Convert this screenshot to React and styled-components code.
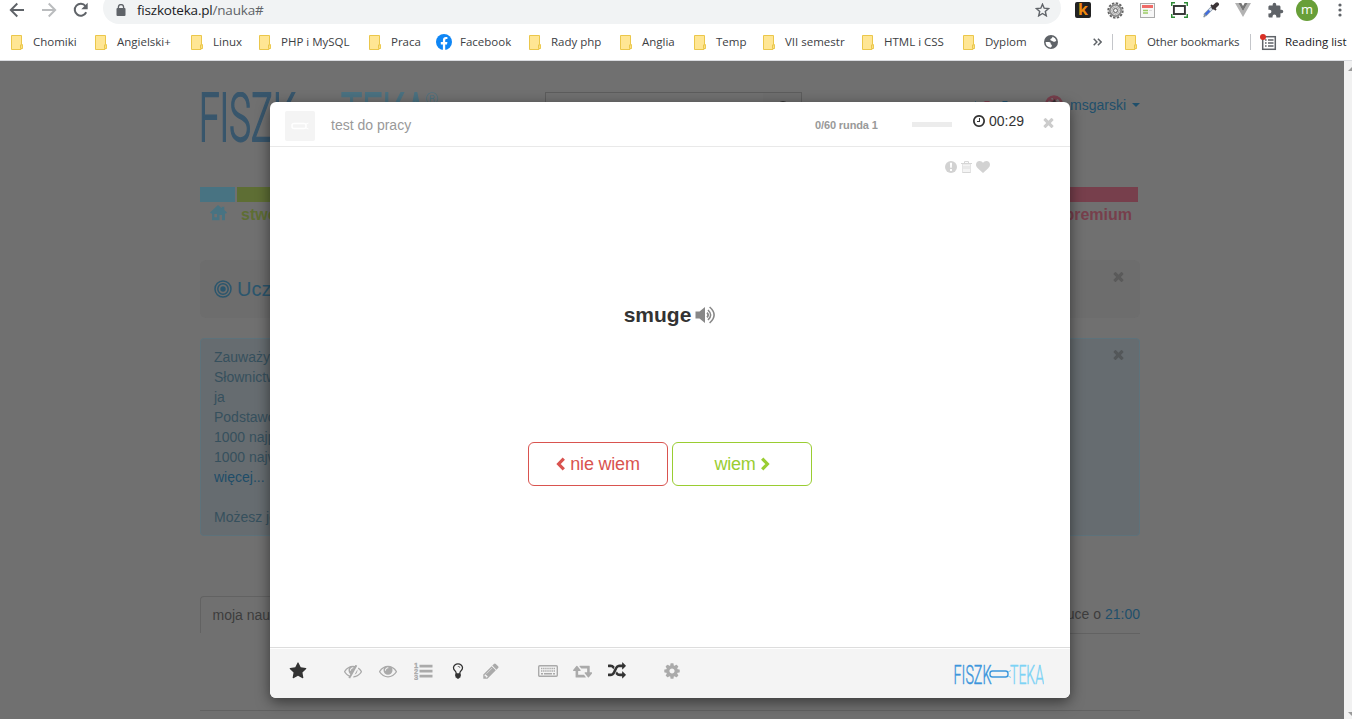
import React from "react";
import styled, { createGlobalStyle } from "styled-components";

const GlobalStyle = createGlobalStyle`
  * { box-sizing: border-box; }
  body { margin: 0; background: #707070; overflow: hidden; font: 14px/20px "Liberation Sans", Arial, sans-serif; }
  svg { display: block; flex: none; }
`;

/* ---------- icons ---------- */
const P = {
  star: "M1728 647q0 22-26 48l-363 354 86 500q1 7 1 20 0 21-10.5 35.5t-30.5 14.5q-19 0-40-12l-449-236-449 236q-22 12-40 12-21 0-31.5-14.5t-10.5-35.5q0-6 2-20l86-500-364-354q-25-27-25-48 0-37 56-46l502-73 225-455q19-41 49-41t49 41l225 455 502 73q56 9 56 46z",
  eye: "M1664 960q-152-236-381-353 61 104 61 225 0 185-131.5 316.5t-316.5 131.5-316.5-131.5-131.5-316.5q0-121 61-225-229 117-381 353 133 205 333.5 326.5t434.5 121.5 434.5-121.5 333.5-326.5zm-720-384q0-20-14-34t-34-14q-125 0-214.5 89.5t-89.5 214.5q0 20 14 34t34 14 34-14 14-34q0-86 61-147t147-61q20 0 34-14t14-34zm848 384q0 34-20 69-140 230-376.5 368.5t-499.5 138.5-499.5-139-376.5-368q-20-35-20-69t20-69q140-229 376.5-368t499.5-139 499.5 139 376.5 368q20 35 20 69z",
  eyeSlash: "M555 1335l78-141q-87-63-136-159t-49-203q0-121 61-225-229 117-381 353 167 258 427 375zm389-759q0-20-14-34t-34-14q-125 0-214.5 89.5t-89.5 214.5q0 20 14 34t34 14 34-14 14-34q0-86 61-147t147-61q20 0 34-14t14-34zm363-191q0 7-1 9-106 189-316 567t-315 566l-49 89q-10 16-28 16-12 0-134-70-16-10-16-28 0-12 44-87-143-65-263.5-173t-208.5-245q-20-31-20-69t20-69q153-235 380-371t496-136q89 0 180 17l54-97q10-16 28-16 5 0 18 6t31 15.5 33 18.5 31.5 18.5 19.5 11.5q16 10 16 27zm37 447q0 139-79 253.5t-209 164.5l280-502q8 45 8 84zm448 128q0 35-20 69-39 64-109 145-150 172-347.5 267t-419.5 95l74-132q212-18 392.5-137t301.5-307q-115-179-282-294l63-112q95 64 182.5 153t144.5 184q20 34 20 69z",
  bulb: "M1120 576q0 13-9.5 22.5t-22.5 9.5-22.5-9.5-9.5-22.5q0-46-54-71t-106-25q-13 0-22.5-9.5t-9.5-22.5 9.5-22.5 22.5-9.5q50 0 99.5 16t87 54 37.5 90zm160 0q0-72-34.5-134t-90-101.5-123-62-136.5-22.5-136.5 22.5-123 62-90 101.5-34.5 134q0 101 68 180 10 11 30.5 33t30.5 33q128 153 141 298h228q13-145 141-298 10-11 30.5-33t30.5-33q68-79 68-180zm128 0q0 155-103 268-45 49-74.5 87t-59.5 95.5-34 107.5q47 28 47 82 0 37-25 64 25 27 25 64 0 52-45 81 13 23 13 47 0 46-31.5 71t-77.5 25q-20 44-60 70t-87 26-87-26-60-70q-46 0-77.5-25t-31.5-71q0-24 13-47-45-29-45-81 0-37 25-64-25-27-25-64 0-54 47-82-4-50-34-107.5t-59.5-95.5-74.5-87q-103-113-103-268 0-99 44.5-184.5t117-142 164-89 186.5-32.5 186.5 32.5 164 89 117 142 44.5 184.5z",
  pencil: "M491 1536l91-91-235-235-91 91v107h128v128h107zm523-928q0-22-22-22-10 0-17 7l-542 542q-7 7-7 17 0 22 22 22 10 0 17-7l542-542q7-7 7-17zm-54-192l416 416-832 832h-416v-416zm683 96q0 53-37 90l-166 166-416-416 166-165q36-38 90-38 53 0 91 38l235 234q37 39 37 91z",
  retweet: "M1280 1504q0 13-9.5 22.5t-22.5 9.5h-960q-8 0-13.5-2t-9-7-5.5-8-3-11.5-1-11.5v-600h-192q-26 0-45-19t-19-45q0-24 15-41l320-384q19-22 49-22t49 22l320 384q15 17 15 41 0 26-19 45t-45 19h-192v384h576q16 0 25 11l160 192q7 10 7 21zm640-416q0 24-15 41l-320 384q-20 23-49 23t-49-23l-320-384q-15-17-15-41 0-26 19-45t45-19h192v-384h-576q-16 0-25-12l-160-192q-7-9-7-20 0-13 9.5-22.5t22.5-9.5h960q8 0 13.5 2t9 7 5.5 8 3 11.5 1 11.5v600h192q26 0 45 19t19 45z",
  random: "M666 481q-60 92-137 273-22-45-37-72.5t-40.5-63.5-51-56.5-63-35-81.5-14.5h-224q-14 0-23-9t-9-23v-192q0-14 9-23t23-9h224q250 0 410 225zm1126 799q0 14-9 23l-320 320q-9 9-23 9-13 0-22.5-9.5t-9.5-22.5v-192q-32 0-85 .5t-81 1-73-1-71-5-64-10.5-63-18.5-58-28.5-59-40-55-53.5-56-69.5q59-93 136-273 22 45 37 72.5t40.5 63.5 51 56.5 63 35 81.5 14.5h256v-192q0-14 9-23t23-9q12 0 24 10l319 319q9 9 9 23zm0-896q0 14-9 23l-320 320q-9 9-23 9-13 0-22.5-9.5t-9.5-22.5v-192h-256q-48 0-87 15t-69 45-51 61.5-45 77.5q-32 62-78 171-29 66-49.5 111t-54 105-64 100-74 83-90 68.5-106.5 42-128 16.5h-224q-14 0-23-9t-9-23v-192q0-14 9-23t23-9h224q48 0 87-15t69-45 51-61.5 45-77.5q32-62 78-171 29-66 49.5-111t54-105 64-100 74-83 90-68.5 106.5-42 128-16.5h256v-192q0-14 9-23t23-9q12 0 24 10l319 319q9 9 9 23z",
  cog: "M1152 896q0-106-75-181t-181-75-181 75-75 181 75 181 181 75 181-75 75-181zm512-109v222q0 12-8 23t-20 13l-185 28q-19 54-39 91 35 50 107 138 10 12 10 25t-9 23q-27 37-99 108t-94 71q-12 0-26-9l-138-108q-44 23-91 38-16 136-29 186-7 28-36 28h-222q-14 0-24.5-8.5t-11.5-21.5l-28-184q-49-16-90-37l-141 107q-10 9-25 9-14 0-25-11-126-114-165-168-7-10-7-23 0-12 8-23 15-21 51-66.5t54-70.5q-27-50-41-99l-183-27q-13-2-21-12.5t-8-23.5v-222q0-12 8-23t19-13l186-28q14-46 39-92-40-57-107-138-10-12-10-24 0-10 9-23 26-36 98.5-107.5t94.5-71.5q13 0 26 10l138 107q44-23 91-38 16-136 29-186 7-28 36-28h222q14 0 24.5 8.5t11.5 21.5l28 184q49 16 90 37l142-107q9-9 24-9 13 0 25 10 129 119 165 170 7 8 7 22 0 12-8 23-15 21-51 66.5t-54 70.5q26 50 41 98l183 28q13 2 21 12.5t8 23.5z",
  clock: "M1024 544v448q0 14-9 23t-23 9h-320q-14 0-23-9t-9-23v-64q0-14 9-23t23-9h224v-352q0-14 9-23t23-9h64q14 0 23 9t9 23zm416 352q0-148-73-273t-198-198-273-73-273 73-198 198-73 273 73 273 198 198 273 73 273-73 198-198 73-273zm224 0q0 209-103 385.5t-279.5 279.5-385.5 103-385.5-103-279.5-279.5-103-385.5 103-385.5 279.5-279.5 385.5-103 385.5 103 279.5 279.5 103 385.5z",
  times: "M1490 1322q0 40-28 68l-136 136q-28 28-68 28t-68-28l-294-294-294 294q-28 28-68 28t-68-28l-136-136q-28-28-28-68t28-68l294-294-294-294q-28-28-28-68t28-68l136-136q28-28 68-28t68 28l294 294 294-294q28-28 68-28t68 28l136 136q28 28 28 68t-28 68l-294 294 294 294q28 28 28 68z",
  heart: "M896 1664q-26 0-44-18l-624-602q-10-8-27.5-26t-55.5-65.5-68-97.5-53.5-121-23.5-138q0-220 127-344t351-124q62 0 126.5 21.5t120 58 95.5 68.5 76 68q36-36 76-68t95.5-68.5 120-58 126.5-21.5q224 0 351 124t127 344q0 221-229 450l-623 600q-18 18-44 18z",
};

const Glyph = ({ name, size = 18, box = 1792, color = "#aaa" }) => (
  <svg width={(size * box) / 1792} height={size} viewBox={`0 0 ${box} 1792`} fill={color}><path d={P[name]} /></svg>
);

const Folder = () => (
  <svg width="12" height="15" viewBox="0 0 12 15">
    <path d="M.5.5h10v9h.8v4H10v1H.5z" fill="#ffe694" stroke="#ebc74b" />
    <path d="M9.5 13.5v-3.6h1.8v3.6z" fill="#ffe694" stroke="#ebc74b" />
  </svg>
);
const Facebook = () => (
  <svg width="16" height="16" viewBox="0 0 16 16">
    <circle cx="8" cy="8" r="8" fill="#0f86f5" />
    <path d="M6.9 16v-5.5H4.8V8.1h2.1V6.3c0-2.2 1.2-3.3 3-3.3.8 0 1.5.1 1.5.1v2h-.9c-1 0-1.3.6-1.3 1.3v1.7h2.2l-.4 2.4H9.2V16z" fill="#fff" />
  </svg>
);
const Globe = () => (
  <svg width="14" height="14" viewBox="0 0 14 14">
    <circle cx="7" cy="7" r="7" fill="#5f6368" />
    <path d="M1.600 7h3.200c1.600 0 1.900.8 1.900 1.700s.5 1 1.100 1v1.200c0 .9-.8 1.500-1.700 1.500A5.500 5.500 0 0 1 1.600 7z" fill="#fff" />
    <path d="M12.300 5.500c-.6 1-1.500 1.300-2.700 1.200-1-.1-1-1-2-1-1.200 0-1.500-.8-1.100-1.600.3-.7 1.200-.6 1.600-1.200.3-.5 0-1 .6-1.200a5.500 5.500 0 0 1 3.600 3.800z" fill="#fff" />
  </svg>
);
const ReadingList = () => (
  <svg width="17" height="17" viewBox="0 0 17 17">
    <rect x="2.7" y="2.7" width="12.6" height="12.6" fill="#fff" stroke="#5f6368" strokeWidth="1.5" />
    <path d="M5 6h1.6M5 9h1.6M5 12h1.6M8 6h5.5M8 9h5.5M8 12h5.5" stroke="#5f6368" strokeWidth="1.4" />
    <circle cx="3" cy="3" r="3" fill="#d93025" />
  </svg>
);
const Arrow = ({ flip, color }) => (
  <svg width="16" height="16" viewBox="0 0 16 16">
    <path d={flip ? "M1 8h13M7.700 1.500 14.200 8l-6.500 6.500" : "M15 8H2M8.3 1.5 1.8 8l6.5 6.5"} fill="none" stroke={color} strokeWidth="1.9" />
  </svg>
);
const Reload = () => (
  <svg width="16" height="16" viewBox="0 0 16 16">
    <path d="M13.2 10.3A6 6 0 1 1 12.5 4" fill="none" stroke="#5f6368" strokeWidth="2" />
    <path d="M14.7.8v6.4H8.3z" fill="#5f6368" />
  </svg>
);
const Lock = () => (
  <svg width="10" height="12" viewBox="0 0 10 12">
    <rect x=".5" y="4" width="9" height="8" rx="1" fill="#5f6368" />
    <path d="M2.4 4.5V3.2a2.6 2.6 0 0 1 5.2 0v1.3" fill="none" stroke="#5f6368" strokeWidth="1.3" />
  </svg>
);
const StarOutline = () => (
  <svg width="15" height="14" viewBox="0 0 15 14">
    <path d="m7.500 1.200 1.700 4 4.400.4-3.300 2.900 1 4.300-3.800-2.300-3.800 2.300 1-4.300-3.300-2.900 4.400-.4z" fill="none" stroke="#5f6368" strokeWidth="1.4" />
  </svg>
);
const Frame = () => (
  <svg width="17" height="16" viewBox="0 0 17 16">
    <rect x="2.9" y="4" width="11" height="8" fill="none" stroke="#333" strokeWidth="1.9" />
    <path d="M.7 4V.7H4M13 .7h3.300V4M.7 12v3.300H4M13 15.300h3.300V12" fill="none" stroke="#2e8b35" strokeWidth="1.5" />
  </svg>
);
const Gear = () => (
  <svg width="17" height="17" viewBox="0 0 17 17">
    <circle cx="8.500" cy="8.500" r="7.200" fill="none" stroke="#666" strokeWidth="2" strokeDasharray="2.400 1.370" />
    <circle cx="8.500" cy="8.500" r="5" fill="#ccc" stroke="#8a8a8a" strokeWidth="3" />
    <circle cx="8.500" cy="8.500" r="4.300" fill="none" stroke="#ddd" />
    <circle cx="8.500" cy="8.500" r="2" fill="#eee" stroke="#666" />
  </svg>
);
const News = () => (
  <svg width="15" height="15" viewBox="0 0 15 15">
    <rect x=".5" y=".5" width="14" height="14" fill="#f7f7f7" stroke="#aaa" />
    <path d="M2 3.500h11" stroke="#ef6b68" strokeWidth="3" />
    <path d="M3 7.500h5M3 10h5" stroke="#9ccc65" strokeWidth="1.300" />
    <path d="M9 7.500h3" stroke="#ddd" />
  </svg>
);
const Dropper = () => (
  <svg width="17" height="16" viewBox="0 0 17 16">
    <path d="m9.500 5.500-7 7" stroke="#8898aa" strokeWidth="3.600" strokeLinecap="round" />
    <path d="m9 6-3 3" stroke="#dfe6ee" strokeWidth="2" />
    <path d="m6.500 8.500-4 4" stroke="#3f6be0" strokeWidth="2.300" />
    <path d="m1.800 13.200-1 2" stroke="#789" strokeWidth="1.300" />
    <path d="m10.500 5.500 3.500-3.200" stroke="#3c3437" strokeWidth="4" strokeLinecap="round" />
    <path d="m8 3 5 5" stroke="#3c3437" strokeWidth="1.800" />
  </svg>
);
const Vue = () => (
  <svg width="16" height="14" viewBox="0 0 16 14">
    <path d="M0 0h3.300L8 8.200 12.700 0H16L8 14z" fill="#b3b3b3" />
    <path d="M3.300 0h3L8 3l1.700-3h3L8 8.200z" fill="#777" />
  </svg>
);
const Puzzle = () => (
  <svg width="17" height="17" viewBox="0 0 24 24" fill="#5f6368">
    <path d="M20.500 11H19V7c0-1.100-.9-2-2-2h-4V3.500a2.500 2.500 0 0 0-5 0V5H4c-1.100 0-2 .9-2 2v3.800h1.500a2.700 2.700 0 0 1 0 5.400H2V20c0 1.100.9 2 2 2h3.800v-1.500a2.700 2.700 0 0 1 5.400 0V22H17c1.100 0 2-.9 2-2v-4h1.500a2.500 2.500 0 0 0 0-5z" />
  </svg>
);
const Dots = () => (
  <svg width="4" height="14" viewBox="0 0 4 14" fill="#5f6368">
    <circle cx="2" cy="2" r="1.600" /><circle cx="2" cy="7" r="1.600" /><circle cx="2" cy="12" r="1.600" />
  </svg>
);
const More = () => (
  <svg width="9" height="8" viewBox="0 0 9 8" fill="none" stroke="#5f6368" strokeWidth="1.500">
    <path d="m.7.700 3.200 3.300L.7 7.300M4.900.7l3.200 3.300-3.200 3.300" />
  </svg>
);
const House = () => (
  <svg width="17" height="16" viewBox="0 0 17 16" fill="#487382">
    <path fillRule="evenodd" d="M8 0 0 7.500 1 8.500h1V15.300h7.500V10h2.500v5.300H15V8.500h1.200l.8-1-2.700-2.600V1.800h-2.600v1.400L8 0zM4.300 9H7v3.300H4.300z" />
  </svg>
);
const Target = () => (
  <svg width="18" height="18" viewBox="0 0 18 18" fill="none" stroke="#2b566d">
    <circle cx="9" cy="9" r="8" strokeWidth="1.500" /><circle cx="9" cy="9" r="5.200" strokeWidth="1.500" />
    <circle cx="9" cy="9" r="2.700" fill="#2b566d" stroke="none" />
  </svg>
);
const Emblem = () => (
  <svg width="18" height="18" viewBox="0 0 18 18">
    <circle cx="9" cy="9" r="7.500" fill="#707070" stroke="#773f4c" strokeWidth="2.500" />
    <path d="M9 1v5M3 4l12 5M3 9l6-3 4-4" stroke="#773f4c" strokeWidth="2" />
    <path d="m7 7 3-3 1 4z" fill="#333" />
  </svg>
);
const Counters = () => (
  <svg width="40" height="14" viewBox="0 0 40 14" fill="none">
    <path d="M2.500 0v12" stroke="#3f5f70" /><circle cx="14" cy="5" r="4.500" stroke="#773f4c" strokeWidth="1.500" />
    <circle cx="32" cy="4.500" r="4" stroke="#1f4f6b" strokeWidth="1.500" />
  </svg>
);
const Speaker = () => (
  <svg width="21" height="18" viewBox="0 0 21 18">
    <path d="M.5 5.500h4L10 1v16l-5.500-4.500h-4z" fill="#888" />
    <g fill="none" stroke="#888" strokeWidth="1.600">
      <path d="M12 6.600q2.400 2.400 0 4.800M13 4q5.300 5 0 10M14.600 1q9 8 0 16" />
    </g>
  </svg>
);
const Chevron = ({ right }) => (
  <svg width="10" height="14" viewBox="0 0 10 14">
    <path d={right ? "M2.200 1.700 7.400 7l-5.200 5.300" : "M7.800 1.700 2.600 7l5.200 5.300"} fill="none" stroke="currentColor" strokeWidth="3.200" />
  </svg>
);
const Alert = () => (
  <svg width="12" height="12" viewBox="0 0 12 12">
    <circle cx="6" cy="6" r="6" fill="#d2d2d2" />
    <path d="M4.900 1.800h2.200l-.3 5H5.200zM5 8h2v1.900H5z" fill="#fff" />
  </svg>
);
const Trash = () => (
  <svg width="11" height="12" viewBox="0 0 11 12">
    <path d="M1.500 3h8v8.500h-8z" fill="#f4f4f4" stroke="#e4e4e4" />
    <path d="M2 5h7v3H2z" fill="#e9e9e9" />
    <path d="M0 2.500h11M3.500 2V.6h4V2M1.500 11.500h8" fill="none" stroke="#d6d6d6" />
  </svg>
);
const NumberedList = () => (
  <svg width="19" height="18" viewBox="0 0 19 18" fill="#aaa">
    <path d="M5.500 2.800H18.500v2.700H5.500zM5.500 7.800H18.500v2.700H5.500zM5.500 12.800H18.500v2.700H5.500z" />
    <g fontFamily="Liberation Sans, sans-serif" fontWeight="700" fontSize="7.500" stroke="#aaa" strokeWidth=".3">
      <text x="0" y="5.500">1</text><text x="0" y="11.500">2</text><text x="0" y="17.500">3</text>
    </g>
  </svg>
);
const Keyboard = () => (
  <svg width="20" height="18" viewBox="0 0 20 18" fill="none" stroke="#aaa">
    <rect x=".7" y="3.700" width="18.600" height="10.600" rx="1" strokeWidth="1.400" />
    <path d="M3 6.500h14M3 9h14" strokeWidth="1.400" strokeDasharray="1.400 .7" />
    <path d="M3 11.700h2M6 11.700h8M15 11.700h2" strokeWidth="1.400" />
  </svg>
);

/* ---------- browser chrome ---------- */
const Chrome = styled.header`
  height: 61px; background: #fff; border-bottom: 1px solid #dadce0; overflow: hidden;
  font-family: "Open Sans", "Noto Sans", sans-serif; color: #3c4043;
`;
const NavRow = styled.div`display: flex; align-items: center; height: 24px; padding-left: 9px;`;
const NavButtons = styled.div`display: flex; width: 94px; gap: 16px; margin-top: -4px;`;
const AddressBar = styled.div`
  display: flex; align-items: center; width: 958px; height: 32px; margin-top: -8px; padding: 4px 11px 0 13px;
  background: #f1f3f4; border-radius: 16px; font-size: 14px; color: #5f6368;
`;
const Url = styled.span`
  flex: 1; margin-left: 11px; font-size: 13.500px; letter-spacing: -0.2px;
  b { font-weight: 400; color: #202124; }
`;
const Extensions = styled.div`
  display: grid; grid-template-columns: repeat(6, 32px) 32px 1fr; justify-items: center; align-items: center;
  width: 280px; margin: -4px 0 0 6px;
`;
const Kbadge = styled.span`
  width: 16px; height: 16px; border-radius: 2px; background: #222; color: #f08a10;
  font: 700 16px/15px "Open Sans", sans-serif; text-align: center;
`;
const EndGroup = styled.div`display: flex; align-items: center; gap: 20px; width: 56px; justify-content: center;`;
const Avatar = styled.span`
  width: 22px; height: 22px; border-radius: 50%; background: #689f38; color: #fff;
  font: 13px/20px "Open Sans", sans-serif; text-align: center;
`;
const Bookmarks = styled.nav`display: flex; align-items: center; height: 36px; padding-left: 11px; font-size: 11.500px;`;
const Bookmark = styled.span`
  display: flex; align-items: center; flex: none; width: ${(p) => p.$w}px; white-space: nowrap; color: ${(p) => p.$c || "#3c4043"};
`;
const BookmarkIcon = styled.i`display: flex; flex: none; width: ${(p) => p.$w || 22}px;`;
const Label = styled.span`letter-spacing: ${(p) => p.$ls || 0}px;`;
const Divider = styled.i`flex: none; width: 1px; height: 16px; margin-right: ${(p) => p.$mr || 12}px; background: #c4c6ca;`;

/* ---------- dimmed page ---------- */
const Viewport = styled.main`display: flex; position: relative; height: 658px; background: #707070; overflow: hidden;`;
const Dimmed = styled.div`width: 940px; margin-left: 200px; color: #3d3d3d;`;
const ScrollTrack = styled.div`
  display: flex; flex-direction: column; justify-content: space-between; align-items: flex-end;
  width: 8px; margin-left: auto; padding: 5px 0 3px; background: #f1f1f1;
`;
const Top = styled.div`display: flex; height: 126px; padding-top: 31px;`;
const LogoSlot = styled.div`width: 345px;`;
const Search = styled.div`
  display: flex; justify-content: flex-end; width: 257px; height: 34px; border: 1px solid #5c5c5c;
`;
const SearchButton = styled.div`width: 38px; padding: 8px 0 0 14px; background: #6e6e6e;`;
const CounterSlot = styled.div`margin: 9px 0 0 171px;`;
const User = styled.div`
  display: flex; align-items: center; align-self: flex-start; gap: 7px; margin: 3px 0 0 auto; color: #1f4f6b;
  svg { margin-top: -3px; }
`;
const Caret = styled.i`border: 4px solid transparent; border-top-color: #1f4f6b; border-bottom: 0; margin-left: -1px;`;
const Menu = styled.div`display: flex; gap: 2px; height: 73px; padding-right: 2px;`;
const MenuItem = styled.div`
  width: ${(p) => p.$w}px; border-top: 15px solid ${(p) => p.$c}; color: ${(p) => p.$c}; height: 36px; padding: ${(p) => p.$p};
  font: 700 16px/24px "Liberation Sans", Arial, sans-serif; white-space: nowrap; text-align: ${(p) => p.$a || "left"}; margin-left: ${(p) => p.$ml || 0};
`;
const Jumbo = styled.section`
  display: flex; align-items: center; justify-content: space-between; height: 58px; padding: 0 14px 0 14px;
  border-radius: 6px; background: #6d6d6d; color: #2b566d; font-size: 20px;
`;
const JumboTitle = styled.div`display: flex; align-items: center; gap: 5px;`;
const CloseBox = styled.div`align-self: flex-start; padding-top: ${(p) => p.$pt}px;`;
const Info = styled.section`
  display: flex; justify-content: space-between; height: 198px; margin: 20px 0 60px; padding: 8px 13px;
  border: 1px solid #5d727b; border-radius: 4px; background: #666c70; color: #36505d;
  p { margin: 0; } a { color: #1e4c68; }
`;
const Tabs = styled.div`display: flex; justify-content: space-between; height: 38px;`;
const Tab = styled.div`
  width: 130px; height: 37px; padding: 8px 11.500px; border: 1px solid #626262; border-bottom: 0; border-radius: 4px 4px 0 0;
`;
const Next = styled.div`flex: 1; text-align: right; padding-top: 8px; border-bottom: 1px solid #626262; a { color: #1f4f6b; }`;
const Rule = styled.div`margin-top: 76px; border-top: 1px solid #626262;`;

/* ---------- learning dialog ---------- */
const Dialog = styled.div`
  position: absolute; left: 270px; top: 41px; width: 800px; height: 596px; display: flex; flex-direction: column;
  border-radius: 6px; background: #fff; box-shadow: 0 4px 14px rgba(0, 0, 0, 0.5); overflow: hidden; color: #333;
`;
const DialogHead = styled.div`display: flex; height: 45px; padding: 9px 14px 0 15px; border-bottom: 1px solid #e9e9e9;`;
const Thumb = styled.div`display: grid; place-items: center; width: 30px; height: 30px; border-radius: 2px; background: #f4f4f4;`;
const Title = styled.div`width: 484px; margin-left: 16px; line-height: 29px; color: #999;`;
const Round = styled.div`width: 97px; font-size: 11px; line-height: 29px; font-weight: 700; color: #999; letter-spacing: -0.12px;`;
const Progress = styled.div`width: 40px; height: 5px; margin: 11px 20px 0 0; background: #ececec;`;
const Timer = styled.div`display: flex; gap: 3px; width: 69px; svg { margin-top: 3px; }`;
const Study = styled.div`flex: 1; display: flex; flex-direction: column; align-items: center; padding-top: 14px;`;
const Actions = styled.div`display: flex; align-items: center; gap: 4px; height: 12px; align-self: flex-end; margin-right: 80px;`;
const Word = styled.div`
  display: flex; align-items: center; gap: 4px; margin-top: 132px; height: 20px; font-size: 21px; font-weight: 700;
`;
const Answers = styled.div`display: flex; gap: 4px; margin-top: 117px;`;
const Answer = styled.button`
  display: flex; align-items: center; justify-content: center; gap: 4px; width: 140px; height: 44px; padding: 0;
  border: 1px solid ${(p) => p.$c}; border-radius: 6px; background: #fff; color: ${(p) => p.$c};
  font: 18px "Liberation Sans", Arial, sans-serif; letter-spacing: -0.2px;
`;
const Foot = styled.div`
  display: flex; height: 51px; padding: 14px 26px 0 18px; border-top: 1px solid #ddd; background: #f4f4f4; box-shadow: inset 0 1px #fff;
`;
const Tool = styled.span`flex: none; margin-left: ${(p) => p.$ml}px;`;
const FootLogo = styled.div`margin: 1px 0 0 auto;`;

const bookmarks = [
  ["Chomiki", 84], ["Angielski+", 96], ["Linux", 68], ["PHP i MySQL", 110], ["Praca", 67],
  ["Facebook", 93, "fb"], ["Rady php", 91], ["Anglia", 74], ["Temp", 69],
  ["VII semestr", 99], ["HTML i CSS", 101], ["Dyplom", 81],
];

const notes = ["Zauważyliśmy", "Słownictwo", "ja", "Podstawowe", "1000 najpopularniejszych", "1000 najważniejszych"];

const BigLogo = () => (
  <svg width="242" height="52" viewBox="0 0 242 52" fontFamily="Roboto, sans-serif" fontSize="66" fontWeight="300" strokeWidth="1.800">
    <text x="-1" y="49" fill="#38566c" stroke="#38566c" textLength="97" lengthAdjust="spacingAndGlyphs">FISZK</text>
    <text x="141" y="49" fill="#4a7180" stroke="#4a7180" textLength="86" lengthAdjust="spacingAndGlyphs">TEKA</text>
    <text x="225" y="13" fill="#4a7180" fontSize="17">®</text>
  </svg>
);
const SmallLogo = () => (
  <svg width="90" height="22" viewBox="0 0 90 22" fontFamily="Roboto, sans-serif" fontSize="26" fontWeight="300" strokeWidth=".5">
    <text x="-.5" y="20.500" fill="#3d96dc" stroke="#3d96dc" textLength="38" lengthAdjust="spacingAndGlyphs">FISZK</text>
    <rect x="36" y="8" width="18" height="6" rx="2.500" fill="none" stroke="#3d96dc" strokeWidth="1.400" />
    <path d="m54 9 3-1.500M54 13l3 1.500" stroke="#7dd3f5" strokeWidth="1" />
    <text x="56" y="20.500" fill="#7dd3f5" stroke="#7dd3f5" textLength="34" lengthAdjust="spacingAndGlyphs">TEKA</text>
  </svg>
);

export default function App() {
  return (
    <>
      <GlobalStyle />
      <Chrome>
        <NavRow>
          <NavButtons><Arrow color="#5f6368" /><Arrow flip color="#babcbe" /><Reload /></NavButtons>
          <AddressBar><Lock /><Url><b>fiszkoteka.pl</b>/nauka#</Url><StarOutline /></AddressBar>
          <Extensions>
            <Kbadge>k</Kbadge><Gear /><News /><Frame /><Dropper /><Vue /><Puzzle />
            <EndGroup><Avatar>m</Avatar><Dots /></EndGroup>
          </Extensions>
        </NavRow>
        <Bookmarks>
          {bookmarks.map(([name, w, kind]) => (
            <Bookmark key={name} $w={w}>
              <BookmarkIcon $w={kind ? 24 : 22}>{kind ? <Facebook /> : <Folder />}</BookmarkIcon>
              <Label>{name}</Label>
            </Bookmark>
          ))}
          <Bookmark $w={49}><Globe /></Bookmark>
          <Bookmark $w={19}><More /></Bookmark>
          <Divider />
          <Bookmark $w={125}><BookmarkIcon><Folder /></BookmarkIcon><Label $ls={-0.13}>Other bookmarks</Label></Bookmark>
          <Divider $mr={9} />
          <Bookmark $w={90} $c="#202124"><BookmarkIcon $w={25}><ReadingList /></BookmarkIcon><Label>Reading list</Label></Bookmark>
        </Bookmarks>
      </Chrome>
      <Viewport>
        <Dimmed>
          <Top>
            <LogoSlot><BigLogo /></LogoSlot>
            <Search><SearchButton><svg width="14" height="14" viewBox="0 0 14 14"><circle cx="6" cy="6" r="5" fill="none" stroke="#333" strokeWidth="2" /></svg></SearchButton></Search>
            <CounterSlot><Counters /></CounterSlot>
            <User><Emblem />msgarski <Caret /></User>
          </Top>
          <Menu>
            <MenuItem $w={35} $c="#487382" $p="3px 0 0 10px"><House /></MenuItem>
            <MenuItem $w={120} $c="#5e6e34" $p="1px 0 0 4px">stwórz</MenuItem>
            <MenuItem $w={120} $c="#773f4c" $p="1px 6px 0 0" $a="right" $ml="auto">premium</MenuItem>
          </Menu>
          <Jumbo>
            <JumboTitle><Target />Ucz się</JumboTitle>
            <CloseBox $pt={9}><Glyph name="times" size={15} color="#5a5a5a" /></CloseBox>
          </Jumbo>
          <Info>
            <div>
              {notes.map((n) => <p key={n}>{n}</p>)}
              <p><a>więcej...</a></p><p>&nbsp;</p><p>Możesz je</p>
            </div>
            <CloseBox $pt={0}><Glyph name="times" size={15} color="#535759" /></CloseBox>
          </Info>
          <Tabs><Tab>moja nauka</Tab><Next>powtórki w nauce o <a>21:00</a></Next></Tabs>
          <Rule />
        </Dimmed>
        <ScrollTrack>
          <svg width="4" height="5"><path d="M0 5 4 1v4z" fill="#999" /></svg>
          <svg width="4" height="4"><path d="M0 0h4v4z" fill="#999" /></svg>
        </ScrollTrack>
        <Dialog>
          <DialogHead>
            <Thumb><svg width="18" height="8"><rect x="1" y="1.500" width="14" height="5" rx="2" fill="none" stroke="#fff" strokeWidth="1.500" /><path d="m15 2 2.500-1M15 6l2.500 1" stroke="#fff" /></svg></Thumb>
            <Title>test do pracy</Title>
            <Round>0/60 runda 1</Round>
            <Progress />
            <Timer><Glyph name="clock" size={14} color="#333" />00:29</Timer>
            <CloseBox $pt={4}><Glyph name="times" size={15} color="#ccc" /></CloseBox>
          </DialogHead>
          <Study>
            <Actions><Alert /><Trash /><Glyph name="heart" size={14} color="#d2d2d2" /></Actions>
            <Word>smuge<Speaker /></Word>
            <Answers>
              <Answer $c="#d9534f"><Chevron />nie wiem</Answer>
              <Answer $c="#9acd32">wiem<Chevron right /></Answer>
            </Answers>
          </Study>
          <Foot>
            <Tool $ml={0.5}><Glyph name="star" color="#333" /></Tool>
            <Tool $ml={37.5}><Glyph name="eyeSlash" /></Tool>
            <Tool $ml={17}><Glyph name="eye" /></Tool>
            <Tool $ml={16.5}><NumberedList /></Tool>
            <Tool $ml={16.5}><Glyph name="bulb" color="#333" /></Tool>
            <Tool $ml={15}><Glyph name="pencil" /></Tool>
            <Tool $ml={38}><Keyboard /></Tool>
            <Tool $ml={15}><Glyph name="retweet" box={1920} /></Tool>
            <Tool $ml={16}><Glyph name="random" color="#333" /></Tool>
            <Tool $ml={36.5}><Glyph name="cog" /></Tool>
            <FootLogo><SmallLogo /></FootLogo>
          </Foot>
        </Dialog>
      </Viewport>
    </>
  );
}
